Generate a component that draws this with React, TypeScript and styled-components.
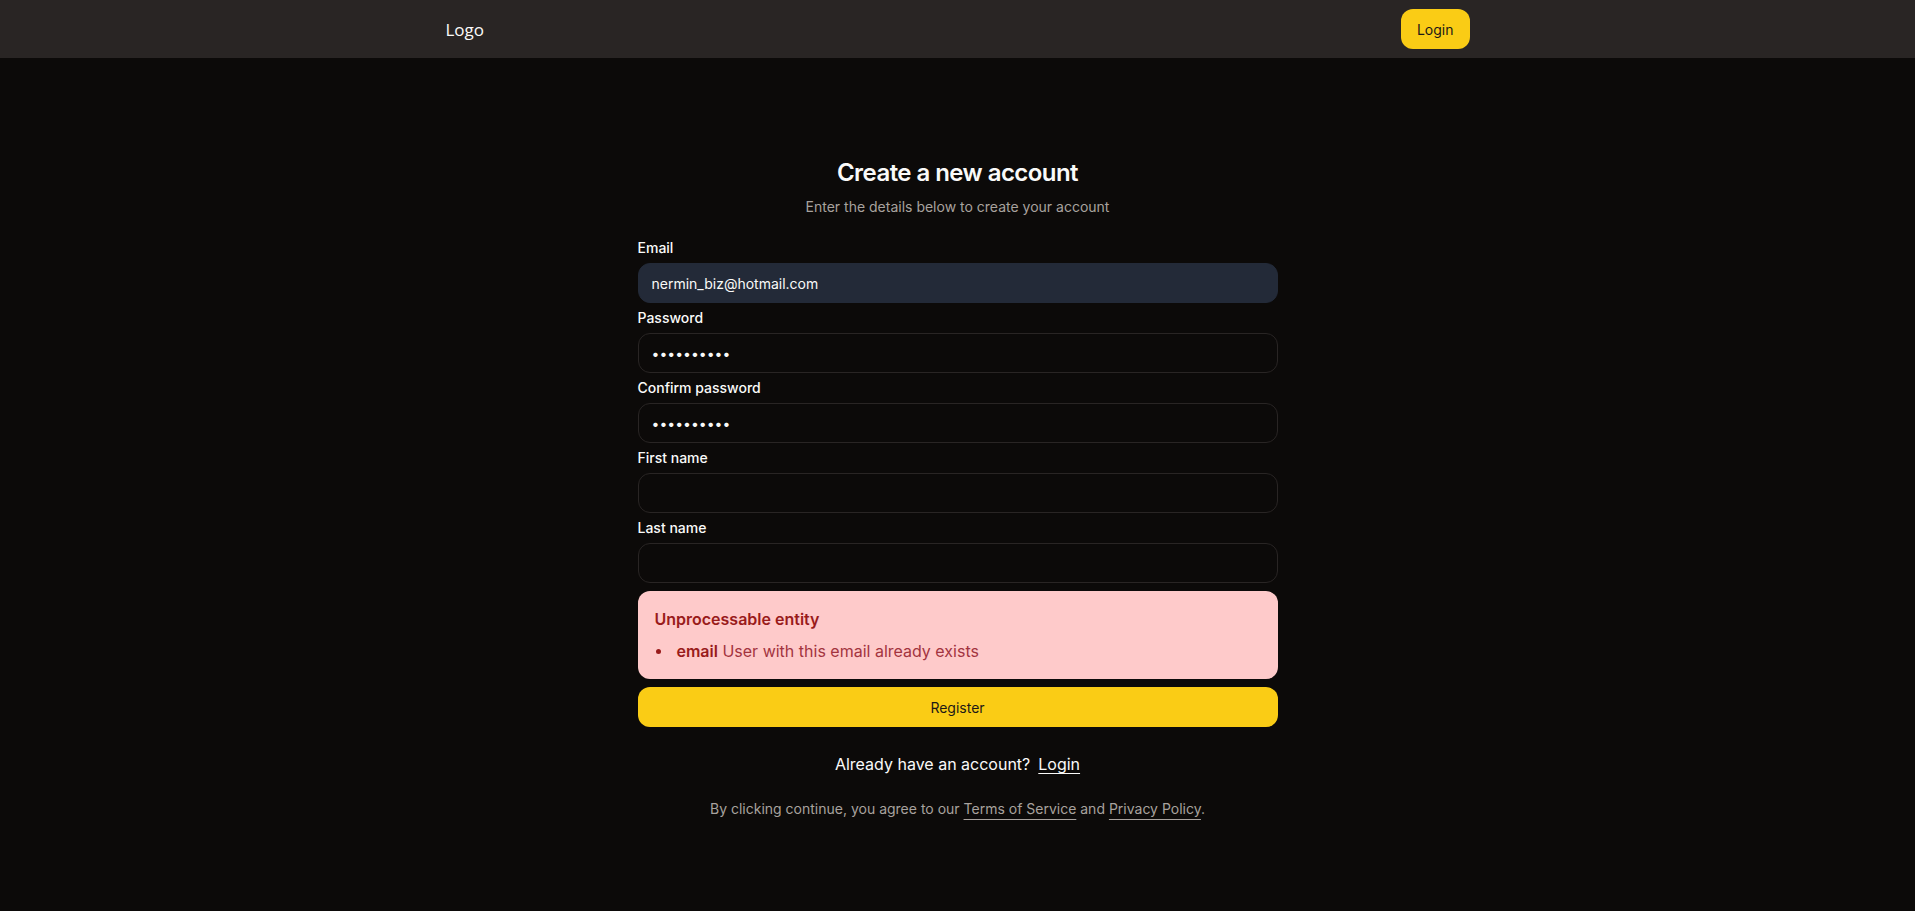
import React from 'react'
import styled, {createGlobalStyle} from 'styled-components'

const GlobalStyle = createGlobalStyle`
  html, body {
    margin: 0;
    padding: 0;
    background: #0c0a09;
    font-family: Inter, "Noto Sans", sans-serif;
    color: #fafaf9;
  }
  * {
    box-sizing: border-box;
  }
`

const Page = styled.div`
  min-height: 911px;
  background: #0c0a09;
`

const Header = styled.header`
  height: 58px;
  background: #292524;
`

const HeaderInner = styled.div`
  width: 1024px;
  height: 100%;
  margin: 0 auto;
  display: flex;
  align-items: center;
  justify-content: space-between;
`

const Logo = styled.span`
  font-family: "Open Sans", "Noto Sans", sans-serif;
  font-size: 17px;
  color: #fafaf9;
`

const NavButton = styled.button`
  height: 40px;
  padding: 0 16px;
  border: none;
  border-radius: 12px;
  background: #facc15;
  color: #1c1917;
  font-family: Inter, sans-serif;
  font-size: 14px;
  cursor: pointer;
`

const Main = styled.main`
  display: flex;
  justify-content: center;
  padding-top: 99px;
`

const FormColumn = styled.div`
  width: 640px;
  display: flex;
  flex-direction: column;
`

const Title = styled.h1`
  margin: 0;
  text-align: center;
  font-size: 24px;
  line-height: 32px;
  font-weight: 600;
  letter-spacing: -0.55px;
  color: #fafaf9;
`

const Subtitle = styled.p`
  margin: 8px 0 24px;
  text-align: center;
  font-size: 14px;
  line-height: 20px;
  color: #a8a29e;
`

const Form = styled.form`
  display: flex;
  flex-direction: column;
  gap: 8px;
`

const Field = styled.div`
  display: flex;
  flex-direction: column;
  gap: 8px;
`

const Label = styled.label`
  font-size: 14px;
  line-height: 14px;
  font-weight: 500;
  color: #fafaf9;
`

const Input = styled.input<{$filled?: boolean}>`
  height: 40px;
  width: 100%;
  padding: 0 13px;
  border-radius: 12px;
  border: 1px solid ${({$filled}) => ($filled ? '#232a38' : '#292524')};
  background: ${({$filled}) => ($filled ? '#232a38' : '#0c0a09')};
  color: #fafaf9;
  font-family: Inter, sans-serif;
  font-size: 14px;
  outline: none;
`

const ErrorBox = styled.div`
  padding: 16px 17px;
  border-radius: 12px;
  background: #fecaca;
  color: #991b1b;
  display: flex;
  flex-direction: column;
  gap: 8px;
`

const ErrorTitle = styled.div`
  font-size: 16px;
  line-height: 24px;
  font-weight: 600;
`

const ErrorList = styled.ul`
  margin: 0;
  padding: 0;
  list-style: none;
`

const ErrorItem = styled.li`
  display: flex;
  align-items: center;
  gap: 16px;
  font-size: 16px;
  line-height: 24px;
  color: #a3343f;

  & strong {
    font-weight: 600;
    color: #991b1b;
  }
`

const Dot = styled.span`
  width: 5px;
  height: 5px;
  margin-left: 1px;
  border-radius: 50%;
  background: #991b1b;
  flex-shrink: 0;
`

const SubmitButton = styled.button`
  height: 40px;
  width: 100%;
  border: none;
  border-radius: 12px;
  background: #facc15;
  color: #1c1917;
  font-family: Inter, sans-serif;
  font-size: 14px;
  cursor: pointer;
`

const LoginPrompt = styled.p`
  margin: 25px 0 0;
  text-align: center;
  font-size: 16px;
  line-height: 24px;
  color: #fafaf9;
`

const PromptLink = styled.a`
  margin-left: 8px;
  color: #fafaf9;
  text-decoration: underline;
  text-underline-offset: 3px;
`

const Terms = styled.p`
  margin: 23px 0 0;
  text-align: center;
  font-size: 14px;
  line-height: 20px;
  color: #a8a29e;
`

const TermsLink = styled.a`
  color: #a8a29e;
  text-decoration: underline;
  text-underline-offset: 5px;
`

const fields = [
  {id: 'email', label: 'Email', type: 'email', value: 'nermin_biz@hotmail.com', filled: true},
  {id: 'password', label: 'Password', type: 'password', value: '1234567890'},
  {id: 'confirm', label: 'Confirm password', type: 'password', value: '1234567890'},
  {id: 'first', label: 'First name', type: 'text', value: ''},
  {id: 'last', label: 'Last name', type: 'text', value: ''},
]

export default function App() {
  return (
    <Page>
      <GlobalStyle />
      <Header>
        <HeaderInner>
          <Logo>Logo</Logo>
          <NavButton>Login</NavButton>
        </HeaderInner>
      </Header>

      <Main>
        <FormColumn>
          <Title>Create a new account</Title>
          <Subtitle>Enter the details below to create your account</Subtitle>

          <Form onSubmit={e => e.preventDefault()}>
            {fields.map(f => (
              <Field key={f.id}>
                <Label htmlFor={f.id}>{f.label}</Label>
                <Input id={f.id} type={f.type} defaultValue={f.value} $filled={f.filled} />
              </Field>
            ))}

            <ErrorBox>
              <ErrorTitle>Unprocessable entity</ErrorTitle>
              <ErrorList>
                <ErrorItem>
                  <Dot />
                  <span>
                    <strong>email</strong> User with this email already exists
                  </span>
                </ErrorItem>
              </ErrorList>
            </ErrorBox>

            <SubmitButton type="submit">Register</SubmitButton>
          </Form>

          <LoginPrompt>
            Already have an account?
            <PromptLink href="#">Login</PromptLink>
          </LoginPrompt>

          <Terms>
            By clicking continue, you agree to our <TermsLink href="#">Terms of Service</TermsLink> and{' '}
            <TermsLink href="#">Privacy Policy</TermsLink>.
          </Terms>
        </FormColumn>
      </Main>
    </Page>
  )
}
